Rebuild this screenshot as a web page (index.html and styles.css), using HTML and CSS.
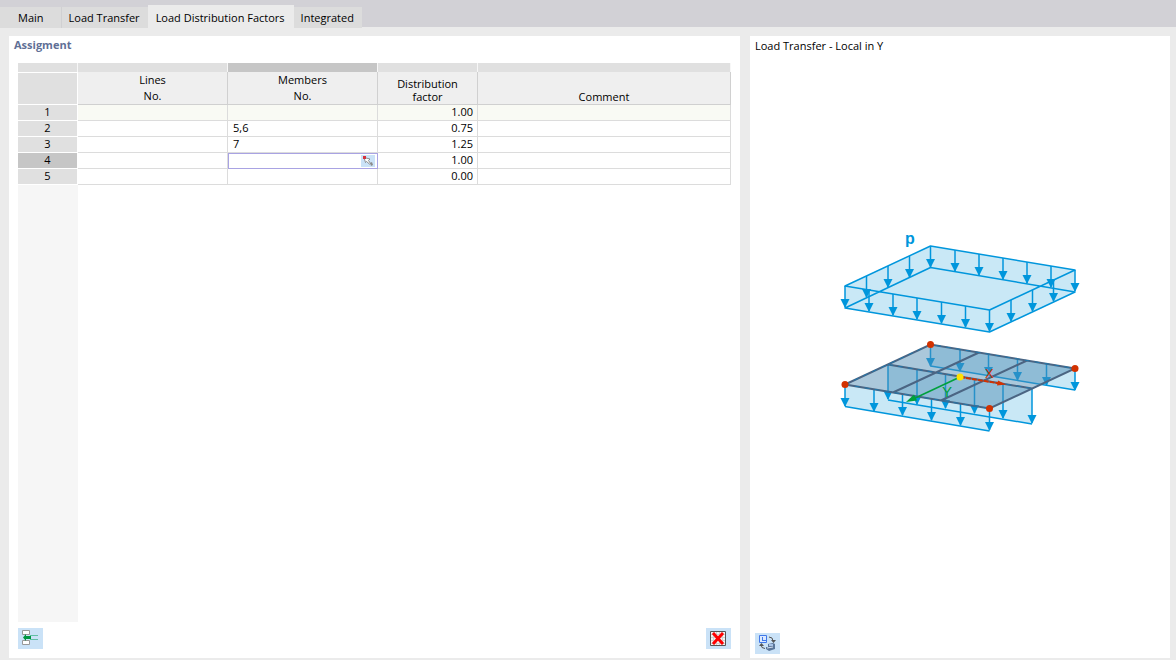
FILE: index.html
```
<!DOCTYPE html>
<html lang="en">
<head>
<meta charset="utf-8">
<title>Load Distribution Factors</title>
<link rel="stylesheet" href="styles.css">
</head>
<body>
<nav class="tabs" role="tablist">
  <button class="tab tab-first" role="tab">Main</button>
  <button class="tab" role="tab">Load Transfer</button>
  <button class="tab tab-active" role="tab" aria-selected="true">Load Distribution Factors</button>
  <button class="tab" role="tab">Integrated</button>
</nav>
<main class="workspace">
  <section class="panel assignment">
    <h2 class="panel-title">Assigment</h2>
    <div class="grid-area">
      <table class="factors">
        <colgroup><col class="col-index"><col class="col-object"><col class="col-object"><col class="col-factor"><col></colgroup>
        <thead>
          <tr class="strip"><td></td><td></td><td class="current"></td><td></td><td></td></tr>
          <tr class="heads">
            <th class="index"></th>
            <th class="roomy">Lines<br>No.</th>
            <th class="roomy">Members<br>No.</th>
            <th>Distribution<br>factor</th>
            <th>Comment</th>
          </tr>
        </thead>
        <tbody>
          <tr class="default"><th>1</th><td></td><td></td><td class="num">1.00</td><td></td></tr>
          <tr><th>2</th><td></td><td>5,6</td><td class="num">0.75</td><td></td></tr>
          <tr><th>3</th><td></td><td>7</td><td class="num">1.25</td><td></td></tr>
          <tr><th class="current">4</th><td></td>
            <td class="editing"><div class="editor"><input class="editor-input" type="text" aria-label="Members No."><button class="pick" aria-label="Select members">
              <svg width="12" height="12" viewBox="0 0 12 12"><path d="M2 2.500l6 1.500-1.500 1.500 2 3-1 .500-3-2.500-1 1z" fill="#fff" stroke="#777" stroke-width=".8"/><path d="M8 8l2-1 1 3-2 1z" fill="#8b8b8b"/><path d="M1 1h3v3H1z" fill="#d7333d"/></svg>
            </button></div></td>
            <td class="num">1.00</td><td></td></tr>
          <tr><th>5</th><td></td><td></td><td class="num">0.00</td><td></td></tr>
        </tbody>
      </table>
      <div class="gutter"></div>
    </div>
    <footer class="actions">
      <button class="tool" aria-label="Insert row">
        <svg width="25" height="21" viewBox="0 0 25 21"><path d="M4.500 2.500h7v4h-7zM4.500 12.500h7v4h-7z" fill="#fff" stroke="#999" /><path d="M12 7.500h8M12 11.500h8" stroke="#62bfa6"/><path d="M5 9.500l3-3.500v2h5v3H8v2z" fill="#00963f"/></svg>
      </button>
      <button class="tool" aria-label="Delete all rows">
        <svg width="25" height="21" viewBox="0 0 25 21"><path d="M4.500 3.500h15v14h-15z" fill="#f2f2f2" stroke="#555"/><path d="M5 6.500h14M5 9.500h14M5 12.500h14M5 15.500h14M7.500 4v13M10.500 4v13M13.500 4v13M16.500 4v13" stroke="#d0d0d0"/><path d="M7 5l10 11M17 5L7 16" stroke="#f00" stroke-width="3"/></svg>
      </button>
    </footer>
  </section>
  <section class="panel preview">
    <p class="caption">Load Transfer - Local in Y</p>
    <div class="figure">
      <svg class="diagram" width="250" height="208" viewBox="835 228 250 208" role="img" aria-label="Load transfer in local Y">
        <defs>
          <marker id="tip" markerUnits="userSpaceOnUse" markerWidth="10" markerHeight="10" refX="8" refY="4.500" orient="auto"><path d="M0 0L9 4.500L0 9z" fill="#0096dc"/></marker>
        </defs>
        <g fill="#c9e8f6">
          <path d="M845 286L930.500 246L1075 270V292L989.500 332L845 308z"/>
        </g>
        <g fill="none" stroke="#0096dc" stroke-width="1.500" stroke-linejoin="round">
          <path d="M845 286L930.500 246L1075 270L989.500 310zM845 308L930.500 267.500L1075 292L989.500 332z"/>
          <path marker-end="url(#tip)" d="M845 286v21"/><path marker-end="url(#tip)" d="M866.500 276v21"/><path marker-end="url(#tip)" d="M888 266v21"/><path marker-end="url(#tip)" d="M909.500 256v21"/>
          <path marker-end="url(#tip)" d="M930.500 246v21"/><path marker-end="url(#tip)" d="M955 250v21"/><path marker-end="url(#tip)" d="M979 254v21"/><path marker-end="url(#tip)" d="M1003 258v21"/><path marker-end="url(#tip)" d="M1027 262v21"/><path marker-end="url(#tip)" d="M1051 266v21"/><path marker-end="url(#tip)" d="M1075 270v21"/>
          <path marker-end="url(#tip)" d="M869 290v21"/><path marker-end="url(#tip)" d="M893 294v21"/><path marker-end="url(#tip)" d="M917 298v21"/><path marker-end="url(#tip)" d="M941.500 302v21"/><path marker-end="url(#tip)" d="M965.500 306v21"/><path marker-end="url(#tip)" d="M989.500 310v21"/>
          <path marker-end="url(#tip)" d="M1011 300v21"/><path marker-end="url(#tip)" d="M1032.500 290v21"/><path marker-end="url(#tip)" d="M1053.500 280v21"/>
        </g>
        <g fill="#c9e8f6">
          <path d="M930.500 344.500L1075 368.500V390L930.500 366z"/>
          <path d="M888 364.500L1032 388.500V424L888 400z"/>
          <path d="M845 384.500L989.500 408.500V431L845 406.500z"/>
        </g>
        <g fill="none" stroke="#0096dc" stroke-width="1.500">
          <path d="M930.500 366L1075 390M888 400L1032 424M845 406.500L989.500 431"/>
          <path marker-end="url(#tip)" d="M930.500 345v21"/><path marker-end="url(#tip)" d="M960 350v21"/><path marker-end="url(#tip)" d="M988.500 354v21"/><path marker-end="url(#tip)" d="M1017.500 359v21"/><path marker-end="url(#tip)" d="M1046.500 364v21"/><path marker-end="url(#tip)" d="M1075 369v21"/>
          <path marker-end="url(#tip)" d="M888 365v34"/><path marker-end="url(#tip)" d="M917 370v34"/><path marker-end="url(#tip)" d="M945.500 374v34"/><path marker-end="url(#tip)" d="M974.500 379v34"/><path marker-end="url(#tip)" d="M1003 384v34"/><path marker-end="url(#tip)" d="M1032 389v34"/>
          <path marker-end="url(#tip)" d="M845 385v21"/><path marker-end="url(#tip)" d="M874 390v21"/><path marker-end="url(#tip)" d="M902.500 394v21"/><path marker-end="url(#tip)" d="M931.500 399v21"/><path marker-end="url(#tip)" d="M960.500 404v21"/><path marker-end="url(#tip)" d="M989.500 409v21"/>
        </g>
        <path d="M845 384.500L930.500 344.500L1075 368.500L989.500 408.500z" fill="#508cb4" fill-opacity=".48"/>
        <g fill="none" stroke="#4b6583" stroke-width="2">
          <path d="M845 384.500L930.500 344.500L1075 368.500L989.500 408.500zM888 364.500L1032 388.500M893 392.500L979 352.500M941 400.500L1027 360.500"/>
          <path d="M845 384.500L930.500 344.500L1075 368.500M845 384.500L989.500 408.500M888 364.500L1032 388.500" stroke="#1f78ad" stroke-width="1" stroke-dasharray="5 5"/>
        </g>
        <path d="M960 377L912 399.500" stroke="#00a03c" stroke-width="1.500"/>
        <path d="M906 402L914 394.500L917 400.500z" fill="#00a03c"/>
        <path d="M960 377L1000 383.500" stroke="#d23200" stroke-width="2" stroke-dasharray="5 1"/>
        <path d="M1006 384.500L998 380.500L997 385.500z" fill="#d23200"/>
        <circle cx="960" cy="377" r="3.500" fill="#ffe100"/>
        <g fill="#d23200"><circle cx="845" cy="384.500" r="3.500"/><circle cx="930.500" cy="344.500" r="3.500"/><circle cx="1075" cy="368.500" r="3.500"/><circle cx="989.500" cy="408.500" r="3.500"/></g>
        <text class="load-label" x="905" y="244">p</text>
        <text class="axis-x" x="985" y="378">X</text>
        <text class="axis-y" x="942" y="397">Y</text>
      </svg>
    </div>
    <footer class="actions">
      <button class="tool" aria-label="Switch picture">
        <svg width="25" height="21" viewBox="0 0 25 21"><path d="M4.500 2.500h7v7h-7z" fill="#dbe9ff" stroke="#4178e8"/><path d="M7 4h1v3h3v1H7z" fill="#4178e8"/><path d="M14 4q4 0 4 4M10 15.500q-4 0-4-4" fill="none" stroke="#555"/><path d="M16 7h5l-2.500 3zM4 13h5l-2.500-3z" fill="#555"/><path d="M13 11l5-1 2 1v5l-6 2-3-2v-2h2z" fill="#5b7699"/><path d="M14 11h4v2h-4z" fill="#a9c3e6"/><path d="M12 15l6-1" stroke="#d5e2f2"/></svg>
      </button>
    </footer>
  </section>
</main>
</body>
</html>
```
FILE: styles.css
```
* { box-sizing: border-box; }
body {
  margin: 0;
  min-height: 100vh;
  display: flex;
  flex-direction: column;
  background: #ebebeb;
  color: #000;
  font: 11px/16px "Open Sans", "Noto Sans", sans-serif;
}
button, input { font: inherit; color: inherit; border: 0; padding: 0; margin: 0; }
svg { display: block; }

.tabs {
  display: flex;
  align-items: flex-end;
  height: 28px;
  background: linear-gradient(#d2d1d6 27px, #ebebeb 27px);
}
.tab { height: 21px; padding: 0 8px 0 7px; background: #dcdcdc; }
.tab-first { padding: 0 17px 0 18px; border-right: 1px solid #d0d0d2; }
.tab-active { height: 23px; padding: 2px 9px 0 8px; background: #ebebeb; }

.workspace {
  flex: 1;
  display: grid;
  grid-template-columns: 731fr 420fr;
  gap: 10px;
  padding: 8px 6px 2px 9px;
}
.panel { display: flex; flex-direction: column; background: #fff; min-width: 0; }
.assignment { padding: 0 9px 9px; }
.preview { padding: 0 5px 4px; }
.panel-title {
  margin: 1px 0 10px -4px;
  font-size: 11px;
  line-height: 16px;
  font-weight: 700;
  color: #5f6f96;
}
.caption { margin: 2px 0 0; }

.grid-area { flex: 1; display: flex; flex-direction: column; }
.gutter { flex: 1; width: 60px; background: #f6f6f6; }

.factors { width: 100%; table-layout: fixed; border-collapse: separate; border-spacing: 0; }
.col-index { width: 60px; }
.col-object { width: 150px; }
.col-factor { width: 100px; }
.factors th, .factors td { padding: 0; font-weight: 400; height: 16px; line-height: 14px; vertical-align: top; }
.factors td { border-right: 1px solid #dcdcdc; border-bottom: 1px solid #dcdcdc; padding-left: 5px; }
.factors tbody th { background: #e0e0e0; border-right: 1px solid #fff; border-bottom: 1px solid #fff; }
.factors .strip td { height: 9px; background: #e0e0e0; border-color: #f7f7f7; border-bottom: 0; }
.factors .strip .current, .factors tbody .current { background: #c6c6c6; }
.factors .heads th {
  height: 33px;
  padding-bottom: 1px;
  line-height: 13px;
  vertical-align: bottom;
  background: #efefef;
  border-right: 1px solid #d0d0d0;
  border-bottom: 1px solid #d0d0d0;
}
.factors .heads .roomy { line-height: 16px; padding-bottom: 0; }
.factors .heads .index { background: #e0e0e0; border-color: #fff; border-top: 1px solid #fff; }
.factors .default td { background: #f9faf4; }
.factors .num { text-align: right; padding: 0 4px 0 0; }
.factors .editing { padding: 0; border: 0; }
.editor { display: flex; align-items: center; height: 16px; border: 1px solid #a9a3e3; background: #fff; }
.editor-input { flex: 1; min-width: 0; height: 14px; padding-left: 4px; background: transparent; outline: 0; }
.pick { width: 14px; height: 12px; margin-right: 2px; padding-left: 1px; background: #cae2f7; }

.actions { display: flex; justify-content: space-between; margin-top: 6px; }
.tool { width: 25px; height: 21px; background: #cae2f7; }

.figure { flex: 1; display: flex; align-items: center; justify-content: center; padding-bottom: 17px; }
.load-label { font: 700 16px "Liberation Sans", sans-serif; fill: #0096dc; }
.axis-x { font: 13px "Liberation Sans", sans-serif; fill: #d23200; }
.axis-y { font: 15px "Liberation Sans", sans-serif; fill: #00a03c; }
```
